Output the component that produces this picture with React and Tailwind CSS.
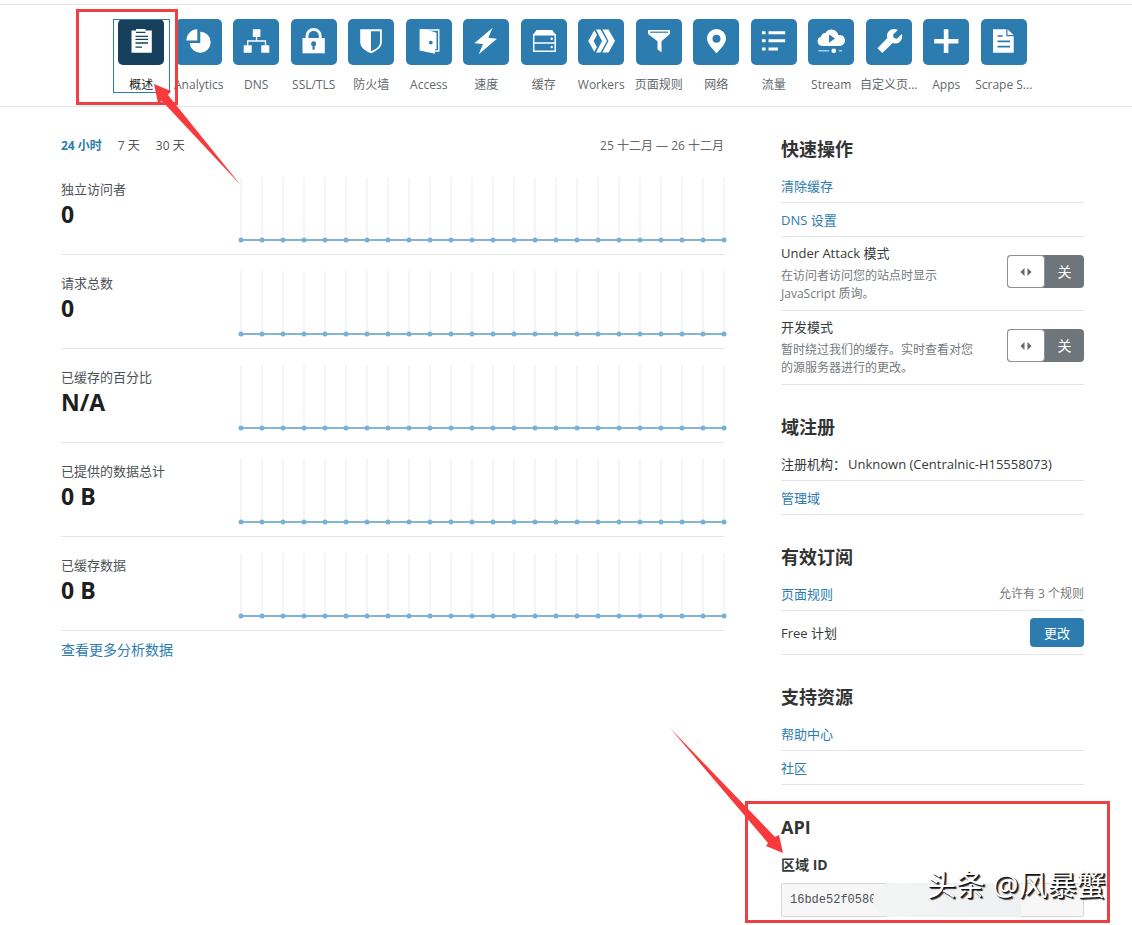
import { useState } from 'react';

const BLUE = '#2c7cb0';

const ClipboardIcon = () => (
  <>
    <path d="M13.5 11.5H18V10h9.5v1.5h6.3v22.3H13.5z" />
    <path d="M18 13.3h9.5M17.5 17.3h12.5M17.5 20.3h12.5M17.5 24h12.5M17.5 28.2H24" fill="none" stroke="#17405c" strokeWidth="1.3" />
  </>
);

const PieIcon = () => (
  <>
    <path d="M21.3 10.3v11.2H10.4A11 11 0 0 1 21.3 10.3z" />
    <path d="M24.3 12.8a10.5 10.5 0 1 1-10.6 11.2h10.6z" />
  </>
);

const DnsIcon = () => (
  <>
    <path d="M19.8 10.3h7.6v7.6h-7.6zM10.7 26.2h8v7.6h-8zM28.3 26.2h8v7.6h-8z" />
    <path d="M23.5 18v4M14.7 26.5V22h17.8v4.5" fill="none" stroke="white" strokeWidth="1.3" />
  </>
);

const LockIcon = () => (
  <>
    <path d="M11.5 19h22.3v15.3H11.5z" />
    <path d="M16 20v-3a6.6 6.6 0 0 1 13.2 0v3" fill="none" stroke="white" strokeWidth="2.8" />
    <circle cx="22.6" cy="24.8" r="2.5" fill={BLUE} />
    <path d="M21.5 25h2.2v5.7h-2.2z" fill={BLUE} />
  </>
);

const ShieldIcon = () => (
  <>
    <path d="M12.2 10.3h21.6V23c0 5-4 8.5-10.8 11.3C16.2 31.500 12.2 28 12.2 23z" />
    <path d="M23 12.3h9V23c0 4-3 6.8-9 9.2z" fill={BLUE} />
  </>
);

const DoorIcon = () => (
  <>
    <path d="M14 11h18.8v21H27" fill="none" stroke="white" strokeWidth="1.4" />
    <path d="M13.6 10.3h5l10.4 3v21.4l-15.4-3.2z" />
    <path d="M29 13.5h1.5v16.8H29z" />
    <circle cx="24.8" cy="23.6" r="1.9" fill={BLUE} />
  </>
);

const BoltIcon = () => <path d="M29.7 8.7 11.3 24.3l8.7.6-4.3 10.4L34 19.7l-8.7-1z" />;

const ServerIcon = () => (
  <>
    <path d="M15.5 11h15.8l3.4 5H12z" />
    <path d="M12.7 15.7h21.5v8.2H12.7zM12.7 23.9h21.5v8.4H12.7z" fill="none" stroke="white" strokeWidth="1.5" />
    <circle cx="30.7" cy="19.7" r="1.2" />
    <circle cx="30.7" cy="28" r="1.2" />
  </>
);

const WorkersIcon = () => (
  <>
    <path d="m16.300 11.300 2.600 4.700-3.300 6 3.300 6-2.600 4.700L10.200 22z" />
    <path d="M18 10.500h4.500L29 22l-6.500 11.500H18L24 22z" />
    <path d="M24.300 10.500h6.200L37 22l-6.500 11.500h-6.200L30.500 22z" />
  </>
);

const FilterIcon = () => (
  <>
    <path d="M12 11h22v4l-8.5 7.3v11.2l-4-3.2v-8L12 15z" />
    <path d="M14 13.2h18" stroke={BLUE} strokeWidth="1.2" />
  </>
);

const PinIcon = () => (
  <path fillRule="evenodd" d="M23.5 10a9.5 9.5 0 0 0-9.5 9.5c0 5 4.5 9 9.5 15 5-6 9.5-10 9.5-15a9.5 9.5 0 0 0-9.5-9.5zm0 5.7a4 4 0 1 1 0 8 4 4 0 0 1 0-8z" />
);

const ListIcon = () => (
  <path d="M11 12.3h3.6v3H11zM17.5 12.3h16.7v3H17.5zM11 20.3h3.6v3H11zM17.5 20.3h16.7v3H17.5zM11 28.5h3.6v3H11zM17.5 28.5h9.5v3h-9.5z" />
);

const StreamIcon = () => (
  <>
    <path d="M14 27a4.7 4.7 0 0 1-1-9.2 5 5 0 0 1 4.5-3.8A7 7 0 0 1 30.3 16a5.6 5.6 0 0 1 2.2 11z" />
    <path d="m21 15.5 6 4-6 4.2z" fill={BLUE} />
    <path d="M10.5 31.8H21M31 31.8h3" stroke="#a9cde3" strokeWidth="1.5" />
    <circle cx="25.8" cy="31.8" r="2.4" />
  </>
);

const WrenchIcon = () => (
  <path d="M31.8 10.9 27 15.7l.8 3.2 3.2.8 4.8-4.7c1.2 4-.8 8.3-4.8 9.3-1.5.4-3 .2-4.3-.3L16.3 34 11.5 29.3l9.8-10.2c-.8-2.5-.3-5 1.5-6.9 2.4-2.4 5.8-2.9 9-1.3z" />
);

const PlusIcon = () => <path d="M20.8 10.3h4.6v9.6h10v4.6h-10v9.5h-4.6v-9.5h-9.6v-4.6h9.6z" />;

const FileIcon = () => (
  <>
    <path d="M12 10.3h13.3v6.9h7.4v16.6H12z" />
    <path d="m26.5 10.3 6.2 5.7h-6.2z" />
    <path d="M16.5 17h5.3M16.5 22.3H29M16.5 27.7H29" stroke={BLUE} strokeWidth="1.7" />
  </>
);

const navItems = [
  { name: '概述', icon: ClipboardIcon },
  { name: 'Analytics', icon: PieIcon },
  { name: 'DNS', icon: DnsIcon },
  { name: 'SSL/TLS', icon: LockIcon },
  { name: '防火墙', icon: ShieldIcon },
  { name: 'Access', icon: DoorIcon },
  { name: '速度', icon: BoltIcon },
  { name: '缓存', icon: ServerIcon },
  { name: 'Workers', icon: WorkersIcon },
  { name: '页面规则', icon: FilterIcon },
  { name: '网络', icon: PinIcon },
  { name: '流量', icon: ListIcon },
  { name: 'Stream', icon: StreamIcon },
  { name: '自定义页...', icon: WrenchIcon },
  { name: 'Apps', icon: PlusIcon },
  { name: 'Scrape S...', icon: FileIcon },
];

const stats = [
  { label: '独立访问者', value: '0' },
  { label: '请求总数', value: '0' },
  { label: '已缓存的百分比', value: 'N/A' },
  { label: '已提供的数据总计', value: '0 B' },
  { label: '已缓存数据', value: '0 B' },
];

const ranges = ['24 小时', '7 天', '30 天'];

const hours = Array.from({ length: 24 }, (_, i) => `${(i / 23) * 100}%`);

const NavBar = () => (
  <header className="mt-1 border-y border-[#e6e6e6] pt-3.5 pr-12 pb-[13px] pl-[61px]">
    <nav className="mx-auto flex max-w-[920px]">
      {navItems.map((item, i) => (
        <a
          key={item.name}
          href="#"
          className={`flex min-w-0 flex-1 flex-col items-center gap-3 text-xs leading-4 whitespace-nowrap
            ${i === 0 ? 'text-[#222] outline-1 -outline-offset-1 outline-[#2c7cb0]' : 'text-[#62676b]'}`}
        >
          <span className={`size-[46px] rounded-[5px] ${i === 0 ? 'bg-[#17405c]' : 'bg-[#2c7cb0]'}`}>
            <svg viewBox="0 0 46 46" className="size-full" fill="white" aria-hidden="true">
              <item.icon />
            </svg>
          </span>
          <span>{item.name}</span>
        </a>
      ))}
    </nav>
  </header>
);

const Sparkline = () => (
  <svg className="h-[63px] min-w-0 flex-1 overflow-visible" aria-hidden="true">
    {hours.map((x) => (
      <line key={x} x1={x} x2={x} y1="0" y2="63" stroke="#ececf0" />
    ))}
    <line x1="0" x2="100%" y1="63" y2="63" stroke="#86b5d3" strokeWidth="2" />
    {hours.map((x) => (
      <circle key={x} cx={x} cy="63" r="2.5" fill="#77b1d8" />
    ))}
  </svg>
);

const Analytics = () => {
  const [range, setRange] = useState(ranges[0]);

  return (
    <section className="min-w-0 flex-1">
      <div className="flex items-center justify-between text-xs leading-[22px] text-[#62676b]">
        <div className="flex gap-4">
          {ranges.map((r) => (
            <button
              key={r}
              onClick={() => setRange(r)}
              className={r === range ? 'font-bold text-[#2c7cb0]' : 'text-[#555]'}
            >
              {r}
            </button>
          ))}
        </div>
        <span>25 十二月 — 26 十二月</span>
      </div>

      <div className="mt-1">
        {stats.map((s) => (
          <div key={s.label} className="flex h-[94px] border-b border-[#e6e6e6] pt-4">
            <div className="w-[180px] pt-0.5">
              <p className="text-[13px] leading-5 text-[#4d5156]">{s.label}</p>
              <p className="text-[23px] leading-[30px] font-bold text-[#1d1f20]">{s.value}</p>
            </div>
            <Sparkline />
          </div>
        ))}
      </div>

      <a href="#" className="mt-[9px] inline-block text-sm leading-5 text-[#2c7cb0]">查看更多分析数据</a>
    </section>
  );
};

const Panel = ({ title, children }) => (
  <section>
    <h2 className="mb-2 text-lg leading-6 font-bold text-[#333]">{title}</h2>
    {children}
  </section>
);

const Row = ({ children }) => (
  <div className="flex h-[34px] items-center justify-between border-b border-[#e3e6e8]">{children}</div>
);

const RowLink = ({ children }) => (
  <a href="#" className="text-[#2c7cb0]">{children}</a>
);

const ToggleRow = ({ title, text }) => {
  const [on, setOn] = useState(false);

  return (
    <div className="flex gap-[30px] border-b border-[#e3e6e8] pt-1.5 pb-[7px]">
      <div className="flex-1">
        <h3>{title}</h3>
        <p className="mt-1 text-xs leading-[18px] text-[#74797d]">{text}</p>
      </div>
      <button
        role="switch"
        aria-checked={on}
        aria-label={title}
        onClick={() => setOn(!on)}
        className="mt-3 flex h-[33px] w-[77px] rounded-[4px] bg-[#6f767b] text-sm text-white"
      >
        <span className="flex h-full w-[38px] items-center justify-center rounded-[4px] border border-[#8d9297] bg-white">
          <svg viewBox="0 0 12 8" className="h-2 w-3" fill="#666" aria-hidden="true">
            <path d="M4.5 0v8L.5 4zM7.5 0v8l4-4z" />
          </svg>
        </span>
        <span className="flex h-full flex-1 items-center justify-center">{on ? '开' : '关'}</span>
      </button>
    </div>
  );
};

const Sidebar = () => (
  <aside className="flex w-[303px] shrink-0 flex-col gap-[30px] pt-0.5 text-[13px] leading-5 text-[#36393a]">
    <Panel title="快速操作">
      <Row><RowLink>清除缓存</RowLink></Row>
      <Row><RowLink>DNS 设置</RowLink></Row>
      <ToggleRow title="Under Attack 模式" text="在访问者访问您的站点时显示 JavaScript 质询。" />
      <ToggleRow title="开发模式" text="暂时绕过我们的缓存。实时查看对您的源服务器进行的更改。" />
    </Panel>

    <Panel title="域注册">
      <Row>
        <p className="flex gap-0.5 whitespace-nowrap">
          <span>注册机构：</span>
          <span>Unknown (Centralnic-H15558073)</span>
        </p>
      </Row>
      <Row><RowLink>管理域</RowLink></Row>
    </Panel>

    <Panel title="有效订阅">
      <Row>
        <RowLink>页面规则</RowLink>
        <span className="text-xs text-[#74797d]">允许有 3 个规则</span>
      </Row>
      <div className="flex h-11 items-center justify-between border-b border-[#e3e6e8]">
        <span>Free 计划</span>
        <button className="h-[29px] w-[54px] rounded-[4px] bg-[#2c7cb0] text-white">更改</button>
      </div>
    </Panel>

    <Panel title="支持资源">
      <Row><RowLink>帮助中心</RowLink></Row>
      <Row><RowLink>社区</RowLink></Row>
    </Panel>

    <Panel title="API">
      <label htmlFor="zone-id" className="mt-4 block text-sm leading-5 font-bold">区域 ID</label>
      <div className="relative mt-2">
        <input
          id="zone-id"
          readOnly
          value="16bde52f0580"
          className="block h-[34px] w-full rounded-[2px] border border-[#d5d7d8] bg-[#f7f7f8] px-2 font-['Liberation_Mono',monospace] text-xs text-[#4d5156]"
        />
        <span className="absolute top-0 left-[92px] h-[34px] w-[148px] rounded-l-full bg-linear-to-r from-[#f3f4f4] to-[#eff0f1]" />
      </div>
    </Panel>
  </aside>
);

// Red marks and the author's signature, laid over the page
const Annotations = () => (
  <div className="pointer-events-none absolute inset-0 overflow-hidden">
    <svg className="absolute top-0 left-0 h-[925px] w-[1132px]" aria-hidden="true">
      <g fill="none" stroke="#ee4043" strokeWidth="3">
        <rect x="77.5" y="10.5" width="99" height="93" />
        <rect x="746.5" y="802.5" width="362" height="119" />
      </g>
      <g fill="#f93a3c">
        <path d="M154 84 171 91 168 95 241 185.500 162 101 158 103z" />
        <path d="M783 853 779 835 775 837 670 728 768 843 766 846z" />
      </g>
    </svg>
    <p className="absolute top-[865px] left-[927px] text-[29px] leading-10 whitespace-nowrap text-white [text-shadow:1px_1px_0_#111,2px_2px_1px_#333]">
      头条 @风暴蟹
    </p>
  </div>
);

export default function App() {
  return (
    <div className="relative flow-root min-h-screen bg-white pb-[7px] font-['Open_Sans','Noto_Sans_CJK_SC',sans-serif]">
      <NavBar />
      <main className="flex items-start gap-[57px] pt-7 pr-12 pl-[61px]">
        <Analytics />
        <Sidebar />
      </main>
      <Annotations />
    </div>
  );
}
